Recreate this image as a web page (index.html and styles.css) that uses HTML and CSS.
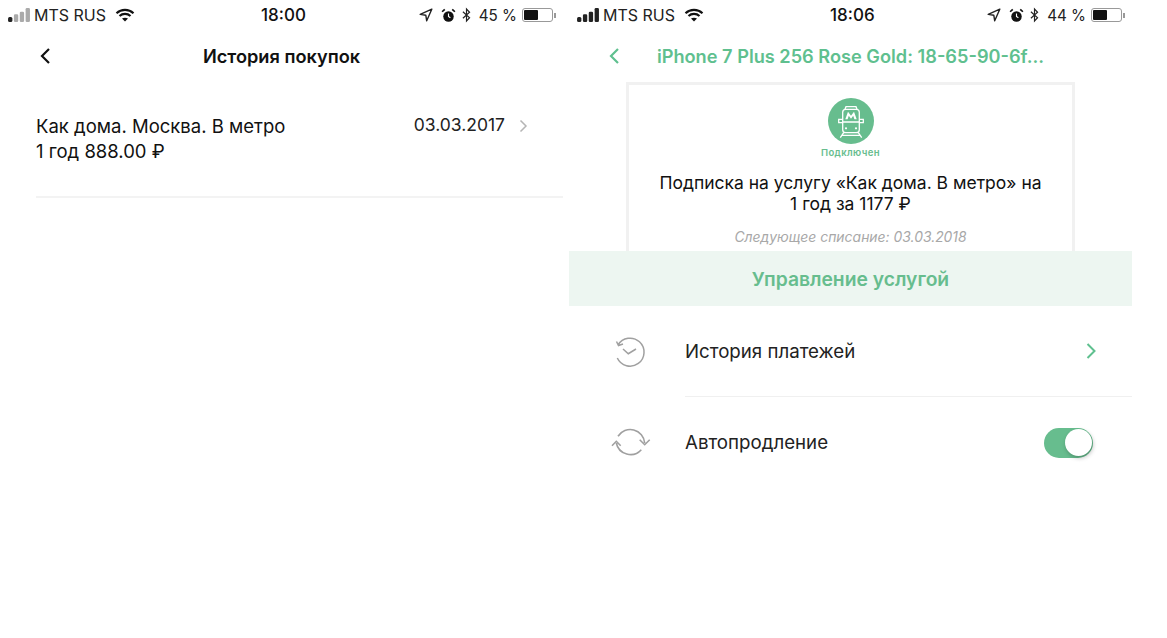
FILE: index.html
```html
<!DOCTYPE html>
<html lang="ru">
<head>
  <meta charset="UTF-8" />
  <title>История покупок</title>
  <link rel="stylesheet" href="styles.css">
</head>
<body>

  <div class="screens">

    <!-- left phone -->
    <section class="phone">
      <div class="status-bar">
        <div class="status-left">
          <svg class="signal" viewBox="0 0 17.2 11" width="22" height="14">
            <rect x="0" y="7" width="3.4" height="4" rx="1.2" fill="#222"/>
            <rect x="4.6" y="5" width="3.4" height="6" rx="1" fill="#aaa"/>
            <rect x="9.2" y="3" width="3.4" height="8" rx="1" fill="#aaa"/>
            <rect x="13.8" y="0" width="3.4" height="11" rx="1" fill="#aaa"/>
          </svg>
          <span>MTS RUS</span>
          <svg class="wifi" viewBox="0 0 20 14" width="20" height="14">
            <path d="M1.5 5.2C6.3 .8 13.7 .8 18.5 5.2M4.5 8C7.6 5.2 12.4 5.2 15.5 8" fill="none" stroke="#111" stroke-width="2.2"/>
            <path d="M7 10.6c1.8-1.3 4.2-1.3 6 0L10 13.6z" fill="#111"/>
          </svg>
        </div>
        <div class="status-time">18:00</div>
        <div class="status-right">
          <svg class="location" viewBox="0 0 14 14" width="14" height="14"><path d="M12.8 1.2 1.2 6.4l5.6.8.9 5.6z" fill="none" stroke="#222" stroke-width="1.4" stroke-linejoin="round"/></svg>
          <svg viewBox="0 0 16 16" width="15" height="15"><circle cx="8" cy="9" r="5.6" fill="#111"/><path d="M8 5.8V9l2 1.4" fill="none" stroke="#fff" stroke-width="1.2"/><path d="M1.2 4 4 1.4M14.8 4 12 1.4" stroke="#111" stroke-width="1.8"/></svg>
          <svg viewBox="0 0 10 16" width="9" height="16"><path d="M1 4.4 8.4 11 5 14.6V1.4L8.4 5 1 11.6" fill="none" stroke="#222" stroke-width="1.3"/></svg>
          <span class="battery-pct">45 %</span>
          <span class="battery"><span class="battery-fill"></span></span>
          <span class="battery-tip"></span>
        </div>
      </div>

      <header class="nav">
        <svg class="back" viewBox="0 0 12 18" width="12" height="18"><path d="M10 2 3 9l7 7" fill="none" stroke="#111" stroke-width="2.2"/></svg>
        <h1 class="nav-title">История покупок</h1>
      </header>

      <div class="purchase">
        <div class="purchase-name">Как дома. Москва. В метро<br>1 год 888.00 ₽</div>
        <div class="purchase-date">03.03.2017</div>
        <svg class="purchase-arrow" viewBox="0 0 9 14" width="9" height="14"><path d="M1.5 1.5 7 7l-5.5 5.5" fill="none" stroke="#b5b5b5" stroke-width="1.5"/></svg>
      </div>
    </section>

    <!-- right phone -->
    <section class="phone">
      <div class="status-bar">
        <div class="status-left">
          <svg class="signal" viewBox="0 0 17.2 11" width="22" height="14">
            <rect x="0" y="7" width="3.4" height="4" rx="1.2" fill="#222"/>
            <rect x="4.6" y="5" width="3.4" height="6" rx="1" fill="#222"/>
            <rect x="9.2" y="3" width="3.4" height="8" rx="1" fill="#222"/>
            <rect x="13.8" y="0" width="3.4" height="11" rx="1" fill="#222"/>
          </svg>
          <span>MTS RUS</span>
          <svg class="wifi" viewBox="0 0 20 14" width="20" height="14">
            <path d="M1.5 5.2C6.3 .8 13.7 .8 18.5 5.2M4.5 8C7.6 5.2 12.4 5.2 15.5 8" fill="none" stroke="#111" stroke-width="2.2"/>
            <path d="M7 10.6c1.8-1.3 4.2-1.3 6 0L10 13.6z" fill="#111"/>
          </svg>
        </div>
        <div class="status-time">18:06</div>
        <div class="status-right">
          <svg class="location" viewBox="0 0 14 14" width="14" height="14"><path d="M12.8 1.2 1.2 6.4l5.6.8.9 5.6z" fill="none" stroke="#222" stroke-width="1.4" stroke-linejoin="round"/></svg>
          <svg viewBox="0 0 16 16" width="15" height="15"><circle cx="8" cy="9" r="5.6" fill="#111"/><path d="M8 5.8V9l2 1.4" fill="none" stroke="#fff" stroke-width="1.2"/><path d="M1.2 4 4 1.4M14.8 4 12 1.4" stroke="#111" stroke-width="1.8"/></svg>
          <svg viewBox="0 0 10 16" width="9" height="16"><path d="M1 4.4 8.4 11 5 14.6V1.4L8.4 5 1 11.6" fill="none" stroke="#222" stroke-width="1.3"/></svg>
          <span class="battery-pct">44 %</span>
          <span class="battery"><span class="battery-fill"></span></span>
          <span class="battery-tip"></span>
        </div>
      </div>

      <header class="nav nav-green">
        <svg class="back" viewBox="0 0 12 18" width="12" height="18"><path d="M10 2 3 9l7 7" fill="none" stroke="#5fc08f" stroke-width="2.2"/></svg>
        <h1 class="nav-title">iPhone 7 Plus 256 Rose Gold: 18-65-90-6f...</h1>
      </header>

      <div class="card">
        <div class="metro-badge">
          <svg viewBox="0 0 46 46" width="46" height="46">
            <circle cx="23" cy="23" r="23" fill="#67bd8e"/>
            <g fill="none" stroke="#fff" stroke-width="1.3">
              <rect x="14.7" y="11.3" width="16.6" height="23.4" rx="3"/>
              <path d="M17 11.3 18 8.7h10l1 2.6M14.7 24h16.6M14.7 21.3h-4v3.4h4M31.3 21.3h4v3.4h-4M15.7 34.7l-3.4 5M30.3 34.7l3.4 5M13.5 37.3h19"/>
            </g>
            <path d="M17.3 21.3 20 13.7l3 4 3-4 2.7 7.6h-2.3l-1.2-3.500-2.200 3-2.200-3-1.200 3.500z" fill="#fff"/>
            <circle cx="18" cy="30.3" r="1.1" fill="#fff"/>
            <circle cx="28" cy="30.3" r="1.1" fill="#fff"/>
          </svg>
          <div class="badge-label">Подключен</div>
        </div>
        <p class="card-text">Подписка на услугу «Как дома. В метро» на<br>1 год за 1177 ₽</p>
        <p class="card-next">Следующее списание: 03.03.2018</p>
      </div>

      <div class="manage">Управление услугой</div>

      <div class="row">
        <div class="row-icon">
          <svg viewBox="0 0 36 36" width="36" height="36"><path d="M5 11A14 14 0 1 1 4.3 24M3.5 7.500 5.500 11.500l4.500-1.500M10 15l5.300 4.700L23 15" fill="none" stroke="#a0a0a0" stroke-width="1.5"/></svg>
        </div>
        <div class="row-body row-line">
          <span class="row-label">История платежей</span>
          <svg class="row-arrow" viewBox="0 0 12 18" width="12" height="18"><path d="M2.5 2 9.5 9l-7 7" fill="none" stroke="#5fc08f" stroke-width="2"/></svg>
        </div>
      </div>

      <div class="row">
        <div class="row-icon row-icon-wide">
          <svg viewBox="0 0 40 36" width="40" height="36"><path d="M7 11.3A14.500 14.500 0 0 1 33.700 18M5.300 18A14.500 14.500 0 0 0 30.300 24.700M28.700 14.700 33.700 19.700 38.700 14.700M1 20.700 5.300 16.300 9.700 20.700" fill="none" stroke="#a0a0a0" stroke-width="1.6"/></svg>
        </div>
        <div class="row-body">
          <span class="row-label">Автопродление</span>
          <span class="toggle"><span class="toggle-knob"></span></span>
        </div>
      </div>
    </section>

  </div>

</body>
</html>
```

FILE: styles.css
```css
body {
  margin: 0;
  background: #fff;
  font-family: Inter, "Liberation Sans", sans-serif;
  color: #111;
}

.screens {
  display: flex;
  gap: 6px;
  width: 1132px;
}

.phone {
  width: 563px;
}

/* status bar */
.status-bar {
  display: flex;
  align-items: center;
  height: 30px;
  font-size: 16px;
}

.status-left {
  display: flex;
  align-items: center;
  gap: 4px;
  padding-left: 8px;
  width: 261px;
  box-sizing: border-box;
  color: #222;
}

.wifi {
  margin-left: 5px;
}

.status-time {
  font-size: 17px;
  font-weight: 500;
}

.status-right {
  display: flex;
  align-items: center;
  gap: 6px;
  margin-left: auto;
  color: #222;
}

.location {
  margin-right: 2px;
}

.battery-pct {
  font-size: 15.2px;
  margin-left: 2px;
}

.battery {
  display: block;
  width: 27px;
  height: 10px;
  border: 1px solid #999;
  border-radius: 3px;
  padding: 1px;
  margin-left: -1px;
}

.battery-fill {
  display: block;
  width: 14px;
  height: 10px;
  background: #111;
  border-radius: 1px;
}

.battery-tip {
  display: block;
  width: 2px;
  height: 5px;
  background: #999;
  margin: 0 7px 0 -5px;
}

/* nav */
.nav {
  display: flex;
  align-items: center;
  justify-content: center;
  position: relative;
  height: 52px;
}

.nav .back {
  position: absolute;
  left: 39px;
  top: 17px;
}

.nav-title {
  margin: 0;
  font-size: 18.2px;
  font-weight: 600;
}

.nav-green .nav-title {
  color: #5fc08f;
}

/* purchase list */
.purchase {
  display: flex;
  align-items: flex-start;
  margin-left: 36px;
  padding: 32px 35px 33px 0;
  border-bottom: 2px solid #f3f3f3;
  height: 49px;
}

.purchase-name {
  font-size: 18.5px;
  line-height: 25px;
}

.purchase-date {
  margin-left: auto;
  font-size: 17.5px;
  line-height: 22px;
  color: #222;
}

.purchase-arrow {
  margin: 5px 0 0 14px;
}

/* subscription card */
.card {
  margin: 0 57px;
  height: 169px;
  box-sizing: border-box;
  border: 3px solid #f1f1f1;
  border-bottom: none;
  text-align: center;
  padding-top: 13px;
}

.metro-badge {
  display: flex;
  flex-direction: column;
  align-items: center;
}

.badge-label {
  margin-top: 3px;
  font-size: 9.5px;
  font-weight: 600;
  letter-spacing: 0.4px;
  color: #67bd8e;
}

.card-text {
  margin: 14px 0 0;
  font-size: 17.5px;
  line-height: 21px;
}

.card-next {
  margin: 15px 0 0;
  font-size: 13.9px;
  font-style: italic;
  color: #a8a8a8;
}

.manage {
  height: 55px;
  line-height: 56px;
  background: #edf6f1;
  color: #67bd8e;
  font-size: 19.3px;
  font-weight: 600;
  text-align: center;
}

/* rows */
.row {
  display: flex;
  height: 91px;
}

.row-icon {
  width: 116px;
  padding-left: 44px;
  box-sizing: border-box;
  display: flex;
  align-items: center;
}

.row-icon-wide {
  padding-left: 42px;
}

.row-body {
  flex: 1;
  display: flex;
  align-items: center;
  justify-content: space-between;
  padding-right: 39px;
}

.row-line {
  border-bottom: 1px solid #f0f0f0;
}

.row-arrow {
  margin-right: -4px;
}

.row-label {
  font-size: 18.7px;
  color: #222;
}

.toggle {
  display: block;
  width: 49px;
  height: 30px;
  border-radius: 15px;
  background: #67bd8e;
  position: relative;
}

.toggle-knob {
  position: absolute;
  right: 1px;
  top: 1px;
  width: 27px;
  height: 27px;
  border-radius: 50%;
  background: #fff;
  box-shadow: 1px 2px 4px rgba(0, 0, 0, 0.25);
}
```
